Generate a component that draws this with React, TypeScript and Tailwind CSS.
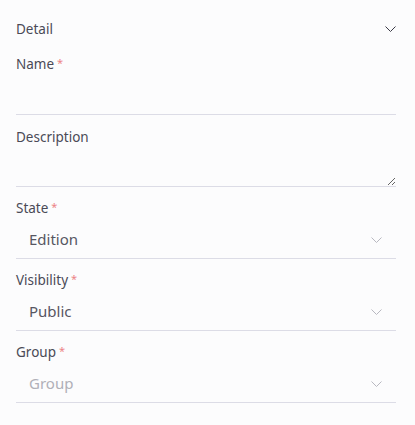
import React from "react";

const Chevron = ({ className }: { className?: string }) => (
  <svg width="11" height="6" viewBox="0 0 11 6" fill="none" className={className}>
    <path d="M0.5 0.5 L5.5 5.5 L10.5 0.5" stroke="currentColor" strokeWidth="1" />
  </svg>
);

const Label = ({ text, required }: { text: string; required?: boolean }) => (
  <div className="h-[18px] flex items-center text-[13.5px] text-[#4a4a56] leading-[18px]">
    <span>{text}</span>
    {required && <span className="text-[#ec8386] ml-[3px] text-[11px] -mt-[3px]">*</span>}
  </div>
);

const Select = ({ value, placeholder }: { value?: string; placeholder?: string }) => (
  <div className="h-[42px] border-b border-[#dcdce6] flex items-center justify-between pl-[13px] pr-[14px] pt-[4px]">
    <span className={value ? "text-[15px] text-[#565662]" : "text-[15px] text-[#b0b0b8]"}>{value ?? placeholder}</span>
    <Chevron className="text-[#b8b8c0]" />
  </div>
);

export default function App() {
  return (
    <div
      className="w-[415px] h-[425px] bg-[#fcfcfd] pl-4 pr-[19px] pt-[19px]"
      style={{ fontFamily: '"Noto Sans", sans-serif' }}
    >
      <div className="h-5 flex items-center justify-between text-[13.5px] text-[#4a4a56]">
        <span>Detail</span>
        <Chevron className="text-[#3a3a46]" />
      </div>
      <div className="mt-4">
        <Label text="Name" required />
        <div className="h-[42px] border-b border-[#dcdce6]" />
      </div>
      <div className="mt-[13px]">
        <Label text="Description" />
        <textarea className="block w-full h-[41px] border-b border-[#dcdce6] bg-transparent outline-none resize-y" />
      </div>
      <div className="mt-3">
        <Label text="State" required />
        <Select value="Edition" />
      </div>
      <div className="mt-3">
        <Label text="Visibility" required />
        <Select value="Public" />
      </div>
      <div className="mt-3">
        <Label text="Group" required />
        <Select placeholder="Group" />
      </div>
    </div>
  );
}
